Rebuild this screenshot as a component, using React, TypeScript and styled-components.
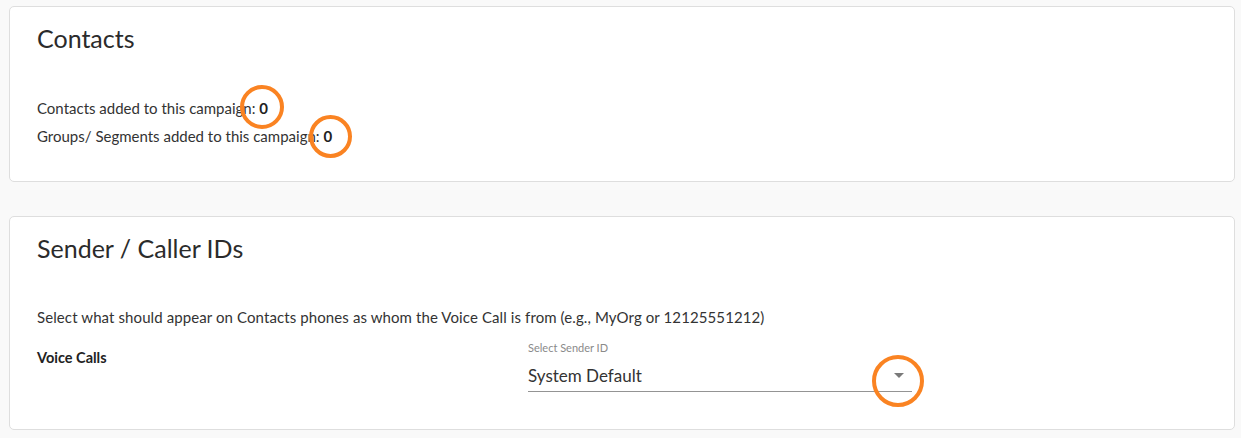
import React from "react";
import styled, { createGlobalStyle } from "styled-components";

const Global = createGlobalStyle`
  html, body { margin: 0; padding: 0; background: #f9f9f9; }
  body { font-family: Lato, "Noto Sans", sans-serif; color: #333; }
`;

const Page = styled.div`
  position: relative;
  width: 1241px;
  height: 438px;
  overflow: hidden;
  padding: 6px 6px 0 9px;
  box-sizing: border-box;
  display: flex;
  flex-direction: column;
  gap: 34px;
`;

const Card = styled.section<{ $h: number }>`
  background: #fff;
  border: 1px solid #dedede;
  border-radius: 5px;
  height: ${(p) => p.$h}px;
  box-sizing: border-box;
  padding: 15px 27px 0;
`;

const Title = styled.h2`
  margin: 0;
  font-size: 25px;
  font-weight: 400;
  line-height: 32px;
  color: #2b2b2b;
`;

const Lines = styled.div<{ $top: number }>`
  margin-top: ${(p) => p.$top}px;
  display: flex;
  flex-direction: column;
  gap: 8px;
`;

const Line = styled.p<{ $spacing?: number }>`
  margin: 0;
  font-size: 15px;
  line-height: 20px;
  letter-spacing: ${(p) => p.$spacing ?? 0}px;
  color: #333;
`;

const Count = styled.b`
  font-weight: 700;
  color: #222;
`;

const Row = styled.div`
  display: grid;
  grid-template-columns: 491px 384px;
  margin-top: 14px;
`;

const Label = styled.div`
  font-size: 14.5px;
  font-weight: 700;
  color: #222;
  padding-top: 7px;
  line-height: 20px;
`;

const Field = styled.div`
  display: flex;
  flex-direction: column;
`;

const FieldLabel = styled.span`
  font-size: 11px;
  line-height: 14px;
  color: #8a8a8a;
`;

const Select = styled.div`
  display: flex;
  align-items: center;
  justify-content: space-between;
  height: 37px;
  box-sizing: border-box;
  padding-top: 4px;
  border-bottom: 1px solid #949494;
  font-size: 17px;
  color: #333;
`;

const Caret = styled.span`
  width: 0;
  height: 0;
  border-left: 5.5px solid transparent;
  border-right: 5.5px solid transparent;
  border-top: 5px solid #7a7a7a;
  margin-right: 8px;
`;

const Ring = styled.div<{ $x: number; $y: number; $d: number }>`
  position: absolute;
  left: ${(p) => p.$x - p.$d / 2}px;
  top: ${(p) => p.$y - p.$d / 2}px;
  width: ${(p) => p.$d}px;
  height: ${(p) => p.$d}px;
  border: 4.5px solid #fa8322;
  border-radius: 50%;
  box-sizing: border-box;
  pointer-events: none;
`;

export default function App() {
  return (
    <>
      <Global />
      <Page>
        <Card $h={176}>
          <Title>Contacts</Title>
          <Lines $top={44}>
            <Line>
              Contacts added to this campaign: <Count>0</Count>
            </Line>
            <Line>
              Groups/ Segments added to this campaign: <Count>0</Count>
            </Line>
          </Lines>
        </Card>
        <Card $h={214}>
          <Title>Sender / Caller IDs</Title>
          <Lines $top={43}>
            <Line $spacing={0.1}>
              Select what should appear on Contacts phones as whom the Voice Call is from (e.g., MyOrg or 12125551212)
            </Line>
          </Lines>
          <Row>
            <Label>Voice Calls</Label>
            <Field>
              <FieldLabel>Select Sender ID</FieldLabel>
              <Select>
                <span>System Default</span>
                <Caret />
              </Select>
            </Field>
          </Row>
        </Card>
        <Ring $x={261.5} $y={107} $d={44} />
        <Ring $x={330} $y={136} $d={43} />
        <Ring $x={897.5} $y={381} $d={52} />
      </Page>
    </>
  );
}
